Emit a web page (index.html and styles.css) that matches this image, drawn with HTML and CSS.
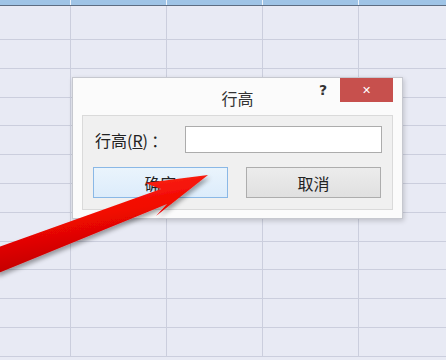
FILE: index.html
```html
<!DOCTYPE html>
<html lang="zh-CN">
<head>
  <meta charset="UTF-8">
  <title>行高</title>
  <link rel="stylesheet" href="styles.css">
</head>
<body>

  <div class="sheet">
    <div class="col-strip">
      <span></span><span></span><span></span><span></span><span></span>
    </div>
    <div class="cells" id="cells"></div>
  </div>

  <div class="dialog">
    <div class="titlebar">
      <span class="title">行高</span>
      <span class="help">?</span>
      <span class="close">&#x2715;</span>
    </div>
    <div class="panel">
      <div class="field">
        <label for="row_h">行高(<u>R</u>)&thinsp;：</label>
        <input type="text" id="row_h">
      </div>
      <div class="buttons">
        <button class="btn btn-ok">确定</button>
        <button class="btn">取消</button>
      </div>
    </div>
  </div>

  <svg class="arrow" width="446" height="360" viewBox="0 0 446 360">
    <defs>
      <linearGradient id="red" x1="0" y1="0" x2="0.35" y2="1">
        <stop offset="0" stop-color="#ff3a2a"/>
        <stop offset="0.5" stop-color="#f20800"/>
        <stop offset="1" stop-color="#b80000"/>
      </linearGradient>
      <filter id="shadow" x="-10%" y="-10%" width="130%" height="140%">
        <feDropShadow dx="2" dy="3" stdDeviation="2" flood-color="#000" flood-opacity="0.35"/>
      </filter>
    </defs>
    <polygon points="-4,248 161,189 145,183 208,175 156,216 167,204 -4,274"
             fill="url(#red)" filter="url(#shadow)"/>
  </svg>

<script>
  // fill the sheet with empty cells
  var cells = document.getElementById("cells");
  for (var i = 0; i < 12 * 5; i++) {
    var c = document.createElement("div");
    c.className = "cell";
    cells.appendChild(c);
  }
</script>
</body>
</html>
```

FILE: styles.css
```css
html, body {
  margin: 0;
  padding: 0;
  height: 100%;
  overflow: hidden;
}
body {
  background: #e8eaf4;
  font-family: "Noto Sans CJK SC", "Noto Sans", sans-serif;
  color: #222;
  position: relative;
}
.sheet {
  display: flex;
  flex-direction: column;
}
.col-strip {
  display: grid;
  grid-template-columns: 71px repeat(4, 96px) 1fr;
  height: 5px;
  background: #9fc4e6;
  border-bottom: 1px solid #5d6d82;
}
.col-strip span {
  border-right: 1px solid #eef4fb;
}
.cells {
  display: grid;
  grid-template-columns: 71px repeat(4, 96px);
  grid-template-rows: 34px;
  grid-auto-rows: 28.8px;
}
.cell {
  border-right: 1px solid #cbcedd;
  border-bottom: 1px solid #cbcedd;
}

/* floating dialog */
.dialog {
  position: absolute;
  left: 72px;
  top: 77px;
  width: 331px;
  height: 142px;
  box-sizing: border-box;
  background: #fbfbfb;
  border: 1px solid #c6c8cf;
  box-shadow: 1px 2px 5px rgba(0, 0, 0, 0.18);
  padding: 0 9px 8px 9px;
  display: flex;
  flex-direction: column;
}
.titlebar {
  height: 37px;
  display: flex;
  align-items: flex-start;
  position: relative;
}
.title {
  flex: 1;
  text-align: center;
  font-size: 16px;
  line-height: 16px;
  margin-top: 12px;
  color: #333;
}
.help {
  position: absolute;
  right: 66px;
  top: 4px;
  font-family: "DejaVu Sans", sans-serif;
  font-weight: bold;
  font-size: 14px;
  color: #333;
}
.close {
  position: absolute;
  right: 0;
  top: 0;
  width: 53px;
  height: 24px;
  background: #c7504d;
  color: #fff;
  font-family: "DejaVu Sans", sans-serif;
  font-weight: bold;
  font-size: 11px;
  display: flex;
  align-items: center;
  justify-content: center;
}
.panel {
  flex: 1;
  background: #f0f0f0;
  border: 1px solid #dadada;
  padding: 10px 10px 11px 10px;
  display: flex;
  flex-direction: column;
  gap: 14px;
}
.field {
  display: flex;
  align-items: center;
  justify-content: space-between;
  padding-left: 2px;
}
.field label {
  font-size: 16px;
  color: #222;
}
.field input {
  width: 197px;
  height: 27px;
  box-sizing: border-box;
  border: 1px solid #acacac;
  background: #fff;
  margin: 0;
}
.buttons {
  display: flex;
  gap: 18px;
}
.btn {
  width: 135px;
  height: 31px;
  box-sizing: border-box;
  font-family: "Noto Sans CJK SC", sans-serif;
  font-size: 16px;
  color: #222;
  border: 1px solid #adadad;
  background: linear-gradient(#ececec, #e0e0e0);
  padding: 0;
  margin: 0;
}
.btn-ok {
  border-color: #8ab8e6;
  background: linear-gradient(#eaf4fc, #dcecfb);
}

/* annotation arrow drawn over the screenshot */
.arrow {
  position: absolute;
  left: 0;
  top: 0;
  pointer-events: none;
}
```
